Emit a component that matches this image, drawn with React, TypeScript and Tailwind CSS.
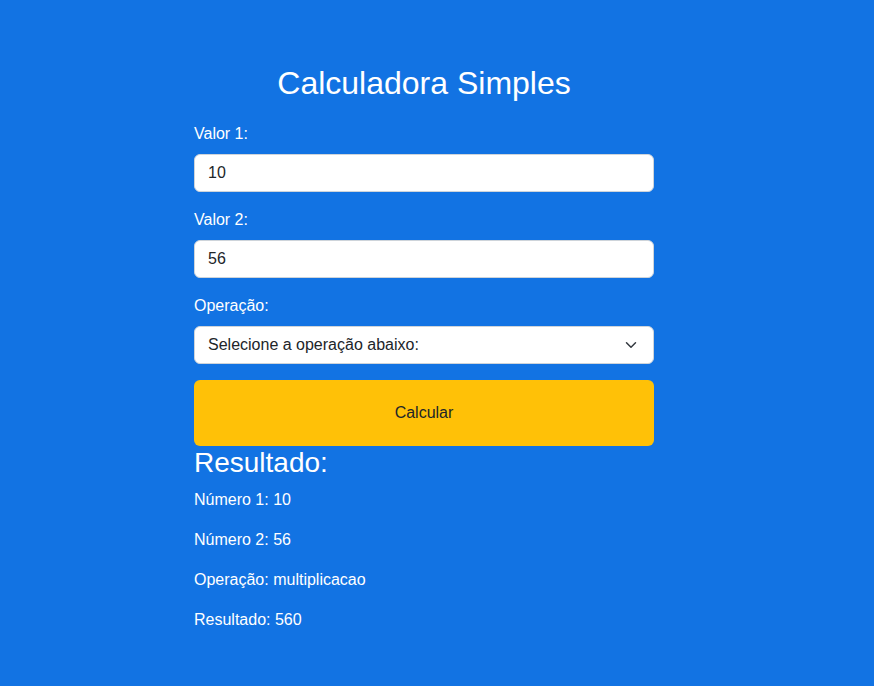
import { useState } from 'react';

export default function App() {
  const [v1, setV1] = useState('10');
  const [v2, setV2] = useState('56');
  const [op, setOp] = useState('');

  return (
    <div className="min-h-[686px] bg-[#1273e3] text-white font-['Liberation_Sans',Arial,sans-serif]">
      <div className="pr-[26px]">
        <div className="w-[460px] mx-auto pt-16">
          <h1 className="text-[32px] leading-[38px] text-center mb-5">Calculadora Simples</h1>

          <label className="block text-base leading-6 mb-2">Valor 1:</label>
          <input
            value={v1}
            onChange={(e) => setV1(e.target.value)}
            className="block w-full h-[38px] px-[13px] mb-4 bg-white text-[#212529] text-base rounded-md border border-[#ced4da] outline-none"
          />

          <label className="block text-base leading-6 mb-2">Valor 2:</label>
          <input
            value={v2}
            onChange={(e) => setV2(e.target.value)}
            className="block w-full h-[38px] px-[13px] mb-4 bg-white text-[#212529] text-base rounded-md border border-[#ced4da] outline-none"
          />

          <label className="block text-base leading-6 mb-2">Operação:</label>
          <div className="relative mb-4">
            <select
              value={op}
              onChange={(e) => setOp(e.target.value)}
              className="block w-full h-[38px] pl-[13px] pr-10 appearance-none bg-white text-[#212529] text-base rounded-md border border-[#ced4da] outline-none"
            >
              <option value="">Selecione a operação abaixo:</option>
              <option value="soma">soma</option>
              <option value="subtracao">subtracao</option>
              <option value="multiplicacao">multiplicacao</option>
              <option value="divisao">divisao</option>
            </select>
            <svg
              className="absolute right-[17px] top-[13px] pointer-events-none"
              width="12"
              height="12"
              viewBox="0 0 16 16"
              fill="none"
              stroke="#343a40"
              strokeWidth="2"
              strokeLinecap="round"
              strokeLinejoin="round"
            >
              <path d="m2 5 6 6 6-6" />
            </svg>
          </div>

          <button className="block w-full h-[66px] bg-[#ffc107] text-[#212529] text-base rounded-md">
            Calcular
          </button>

          <h2 className="text-[28px] leading-[34px] mb-2">Resultado:</h2>
          <p className="text-base leading-6 mb-4">Número 1: 10</p>
          <p className="text-base leading-6 mb-4">Número 2: 56</p>
          <p className="text-base leading-6 mb-4">Operação: multiplicacao</p>
          <p className="text-base leading-6 mb-4">Resultado: 560</p>
        </div>
      </div>
    </div>
  );
}
